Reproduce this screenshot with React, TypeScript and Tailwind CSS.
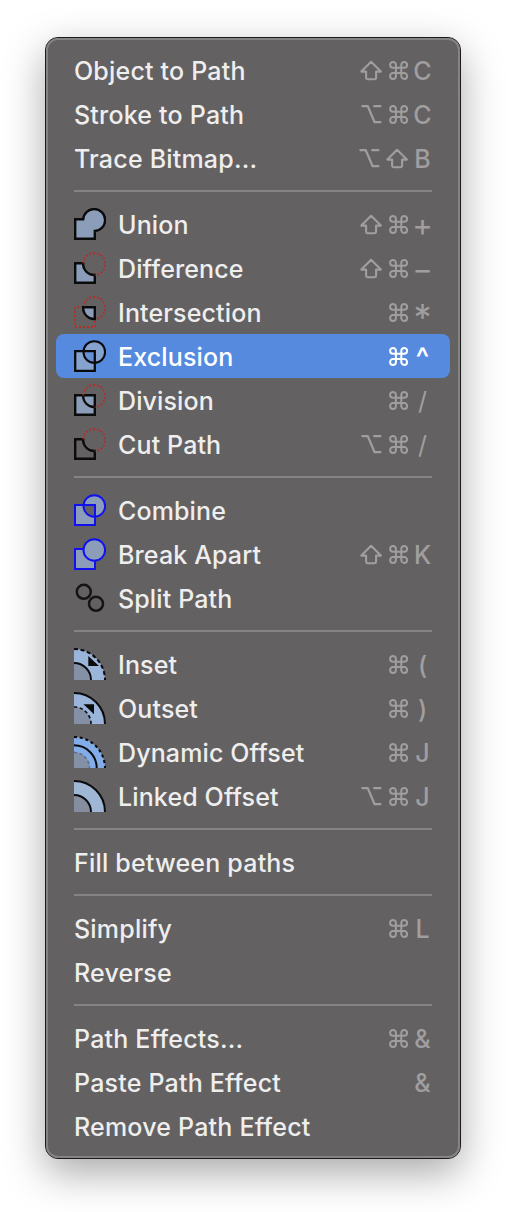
import type { ReactNode } from "react";

const STEEL = "#8b9db8";
const RED = "#b0302a";
const DARK = "#0b0b0b";

function Shift() {
  return (
    <svg className="block h-[26px] w-[26px]" viewBox="0 0 26 26" fill="none" stroke="currentColor" strokeWidth="2.1" strokeLinejoin="round">
      <path d="M11.1 3.8 L20.9 13.6 H16.1 V19.8 Q16.1 21.2 14.7 21.2 H7.5 Q6.1 21.2 6.1 19.8 V13.6 H1.3 Z" />
    </svg>
  );
}

function Command() {
  return (
    <svg className="block h-[26px] w-[26px]" viewBox="0 0 26 26" fill="none" stroke="currentColor" strokeWidth="2">
      <path d="M9.9 9.7 H7 A2.9 2.9 0 1 1 9.9 6.8 V18 A2.9 2.9 0 1 1 7 15.1 H18.2 A2.9 2.9 0 1 1 15.3 18 V6.8 A2.9 2.9 0 1 1 18.2 9.7 Z" />
    </svg>
  );
}

function Option({ className = "" }: { className?: string }) {
  return (
    <svg className={`block h-[26px] w-[26px] ${className}`} viewBox="0 0 26 26" fill="none" stroke="currentColor" strokeWidth="2.2" strokeLinecap="round" strokeLinejoin="round">
      <path d="M2.4 4.2 H7.8 L14.6 20.2 H20.4 M14.2 4.2 H20.4" />
    </svg>
  );
}

function Icon({ children }: { children: ReactNode }) {
  return (
    <svg className="mt-[-3px] block h-8 w-8 shrink-0" viewBox="0 0 32 32" fill="none">
      {children}
    </svg>
  );
}

const dots = { stroke: RED, strokeWidth: 1.8, strokeDasharray: "2.1 1.7" };
const NOTCH = "M1.2 11.2 H9.2 A11 11 0 0 0 20.8 23 V30.8 H1.2 Z";
const LENS = "M9.2 11.2 H20.8 V23 A11 11 0 0 1 9.2 11.2 Z";
const SQUARE = "M1.2 11.2 H20.8 V30.8 H1.2 Z";
const OUTER_ARC = "M9.2 11.2 A11 11 0 1 1 20.8 23";

const icons: Record<string, ReactNode> = {
  union: (
    <Icon>
      <path d="M1.2 11.2 H9.2 A11 11 0 1 1 20.8 23 V30.8 H1.2 Z" fill={STEEL} stroke={DARK} strokeWidth="2.4" />
    </Icon>
  ),
  difference: (
    <Icon>
      <path d={NOTCH} fill={STEEL} stroke={DARK} strokeWidth="2.4" />
      <path d={OUTER_ARC} {...dots} />
    </Icon>
  ),
  intersection: (
    <Icon>
      <path d="M9 11 H1 V31 H21 V23" {...dots} strokeWidth={2} strokeDasharray="2 2" />
      <path d={OUTER_ARC} {...dots} />
      <path d={LENS} fill={STEEL} stroke={DARK} strokeWidth="2.4" />
    </Icon>
  ),
  exclusion: (
    <Icon>
      <path d={SQUARE} fill="#86a2cf" />
      <circle cx="20.3" cy="12" r="10.8" fill="#86a2cf" />
      <path d={LENS} fill="#6690d8" />
      <circle cx="20.3" cy="12" r="10.8" stroke={DARK} strokeWidth="2.1" />
      <path d={SQUARE} stroke={DARK} strokeWidth="2.3" />
    </Icon>
  ),
  division: (
    <Icon>
      <path d={SQUARE} fill={STEEL} stroke={DARK} strokeWidth="2.4" />
      <path d="M9.2 11.2 A11 11 0 0 0 20.8 23" stroke={DARK} strokeWidth="2.3" />
      <path d={OUTER_ARC} {...dots} />
    </Icon>
  ),
  cut: (
    <Icon>
      <path d={NOTCH} stroke={DARK} strokeWidth="2.4" />
      <path d={OUTER_ARC} {...dots} />
    </Icon>
  ),
  combine: (
    <Icon>
      <path d={SQUARE} fill={STEEL} />
      <circle cx="20.3" cy="12" r="10.8" fill={STEEL} />
      <path d={LENS} fill="#646162" />
      <circle cx="20.3" cy="12" r="10.8" stroke="#1010f0" strokeWidth="2" />
      <path d="M1 11 H21 V31 H1 Z" stroke="#1010f0" strokeWidth="2" />
    </Icon>
  ),
  breakApart: (
    <Icon>
      <path d="M1 11 H21 V31 H1 Z" fill={STEEL} stroke="#1010f0" strokeWidth="2" />
      <circle cx="20.3" cy="12" r="10.8" fill={STEEL} stroke="#1010f0" strokeWidth="2" />
    </Icon>
  ),
  split: (
    <Icon>
      <circle cx="9.8" cy="9.8" r="7" stroke="#151515" strokeWidth="2.5" />
      <circle cx="22" cy="21.8" r="7" stroke="#151515" strokeWidth="2.5" />
    </Icon>
  ),
  inset: (
    <Icon>
      <path d="M0 1 A31 31 0 0 1 31 32 H0 Z" fill="#9ab4da" />
      <path d="M0 15 A17 17 0 0 1 17 32 H0 Z" fill="#8490a6" />
      <path d="M0 1 A31 31 0 0 1 31 32" stroke={DARK} strokeWidth="2" strokeDasharray="4 2.6" />
      <path d="M0 15 A17 17 0 0 1 17 32" stroke={DARK} strokeWidth="1.9" />
      <path d="M14.3 8 L25 18 H14.3 Z" fill={DARK} />
    </Icon>
  ),
  outset: (
    <Icon>
      <path d="M0 1 A31 31 0 0 1 31 32 H0 Z" fill="#9ab4da" />
      <path d="M0 15 A17 17 0 0 1 17 32 H0 Z" fill="#8490a6" />
      <path d="M0 1 A31 31 0 0 1 31 32" stroke={DARK} strokeWidth="2" />
      <path d="M0 15 A17 17 0 0 1 17 32" stroke={DARK} strokeWidth="1.6" strokeDasharray="3.4 2.4" />
      <path d="M9.5 12.2 H20 V22.3 Z" fill={DARK} />
    </Icon>
  ),
  dynamic: (
    <Icon>
      <path d="M0 1 A31 31 0 0 1 31 32 H0 Z" fill="#83ade8" />
      <path d="M0 16 A16 16 0 0 1 16 32 H0 Z" fill="#8490a6" />
      <path d="M0 1 A31 31 0 0 1 31 32" stroke={DARK} strokeWidth="2.1" strokeDasharray="3 2.8" />
      <path d="M0 9.3 A22.7 22.7 0 0 1 22.7 32" stroke={DARK} strokeWidth="2" />
      <path d="M0 16.5 A15.5 15.5 0 0 1 15.5 32" stroke="#5c6f91" strokeWidth="1.7" strokeDasharray="3 2.6" />
    </Icon>
  ),
  linked: (
    <Icon>
      <path d="M0 1 A31 31 0 0 1 31 32 H0 Z" fill="#9fb6d5" />
      <path d="M0 15 A17 17 0 0 1 17 32 H0 Z" fill="#848e9f" />
      <path d="M0 1 A31 31 0 0 1 31 32" stroke={DARK} strokeWidth="2" />
      <path d="M0 15 A17 17 0 0 1 17 32" stroke={DARK} strokeWidth="2" />
    </Icon>
  ),
};

type Item = { label: string; mods?: string; keyName?: string; icon?: string; active?: boolean };

const groups: Item[][] = [
  [
    { label: "Object to Path", mods: "⇧⌘", keyName: "C" },
    { label: "Stroke to Path", mods: "⌥⌘", keyName: "C" },
    { label: "Trace Bitmap...", mods: "⌥⇧", keyName: "B" },
  ],
  [
    { label: "Union", mods: "⇧⌘", keyName: "+", icon: "union" },
    { label: "Difference", mods: "⇧⌘", keyName: "−", icon: "difference" },
    { label: "Intersection", mods: "⌘", keyName: "*", icon: "intersection" },
    { label: "Exclusion", mods: "⌘", keyName: "^", icon: "exclusion", active: true },
    { label: "Division", mods: "⌘", keyName: "/", icon: "division" },
    { label: "Cut Path", mods: "⌥⌘", keyName: "/", icon: "cut" },
  ],
  [
    { label: "Combine", icon: "combine" },
    { label: "Break Apart", mods: "⇧⌘", keyName: "K", icon: "breakApart" },
    { label: "Split Path", icon: "split" },
  ],
  [
    { label: "Inset", mods: "⌘", keyName: "(", icon: "inset" },
    { label: "Outset", mods: "⌘", keyName: ")", icon: "outset" },
    { label: "Dynamic Offset", mods: "⌘", keyName: "J", icon: "dynamic" },
    { label: "Linked Offset", mods: "⌥⌘", keyName: "J", icon: "linked" },
  ],
  [{ label: "Fill between paths" }],
  [{ label: "Simplify", mods: "⌘", keyName: "L" }, { label: "Reverse" }],
  [
    { label: "Path Effects...", mods: "⌘", keyName: "&" },
    { label: "Paste Path Effect", keyName: "&" },
    { label: "Remove Path Effect" },
  ],
];

const keyStyles: Record<string, string> = {
  "+": "text-[31px] font-normal",
  "−": "text-[31px] font-normal",
  "*": "pt-[7px] text-[36px] font-normal",
  "^": "pt-[2px] text-[29px]",
  "/": "font-normal",
};

function Modifier({ symbol, beforeShift }: { symbol: string; beforeShift: boolean }) {
  if (symbol === "⇧") return <Shift />;
  if (symbol === "⌥") return <Option className={beforeShift ? "-ml-[2px] mr-[2px]" : ""} />;
  return <Command />;
}

function Row({ item }: { item: Item }) {
  const mods = Array.from(item.mods ?? "");
  return (
    <div
      className={`mx-2 flex h-11 items-center rounded-[8px] pl-[18px] pr-[16px] pt-[2px] ${
        item.active ? "bg-[#558adf] text-white" : "text-[#efeeee]"
      }`}
    >
      {item.icon && <span className="mr-3">{icons[item.icon]}</span>}
      <span className={`whitespace-pre ${item.icon ? "tracking-[0.13px]" : "tracking-[0.2px]"}`}>{item.label}</span>
      <span className={`ml-auto flex items-center ${item.active ? "text-white" : "text-[#a09e9f]"}`}>
        {mods.map((m, i) => (
          <Modifier key={i} symbol={m} beforeShift={mods[i + 1] === "⇧"} />
        ))}
        {item.keyName && (
          <span className={`flex h-[42px] w-[22px] items-center justify-center pr-px ${keyStyles[item.keyName] ?? ""}`}>
            {item.keyName}
          </span>
        )}
      </span>
    </div>
  );
}

export default function App() {
  return (
    <div className="h-[1212px] w-[506px] overflow-hidden bg-white pl-[45px] pt-[37px] font-['Inter','Liberation_Sans',sans-serif] text-[25px] font-medium leading-[42px]">
      <div className="h-[1122px] w-[416px] rounded-[13px] border border-[#1c1b1c] bg-[#646162] shadow-[0_14px_40px_rgba(0,0,0,0.34)]">
        <div className="h-full rounded-[12px] border-2 border-[#858384] pt-[8px]">
          {groups.map((group, g) => (
            <div key={g}>
              {g > 0 && (
                <div className="flex h-[22px] items-start px-[26px] pt-[10px]">
                  <div className="h-[2px] w-full bg-[#858384]" />
                </div>
              )}
              {group.map((item) => (
                <Row key={item.label} item={item} />
              ))}
            </div>
          ))}
        </div>
      </div>
    </div>
  );
}
